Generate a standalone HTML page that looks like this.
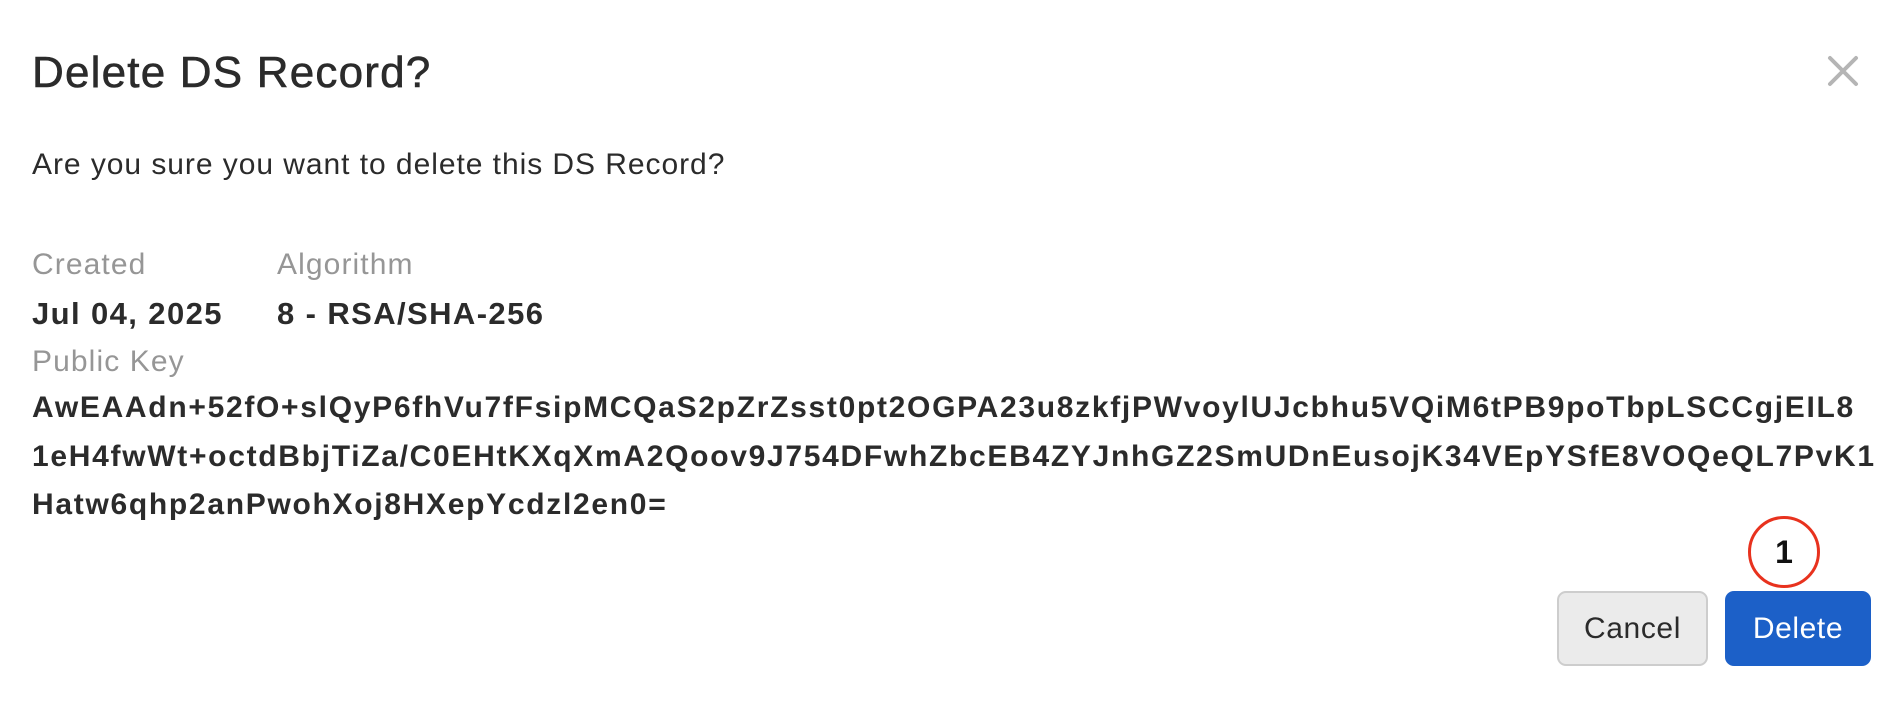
<!DOCTYPE html>
<html><head><meta charset="utf-8"><style>
body{margin:0;width:1903px;height:702px;background:#fff;font-family:"Liberation Sans",Helvetica,Arial,sans-serif;color:#2b2b2b;position:relative;overflow:hidden}
.a{position:absolute;white-space:nowrap}
.t{left:32px;top:48px;font-size:44px;letter-spacing:1.2px;-webkit-text-stroke:0.6px #2b2b2b}
.p{left:32px;top:148px;font-size:30px;letter-spacing:0.95px}
.l{font-size:30px;color:#969696;letter-spacing:1.1px}
.v{font-size:31px;font-weight:bold;letter-spacing:1.4px}
.k{left:32px;font-size:30px;font-weight:bold;letter-spacing:1.7px}
.btn{position:absolute;top:591px;height:75px;border-radius:9px;box-sizing:border-box;font-size:30px;letter-spacing:0.6px;display:flex;align-items:center;justify-content:center}
</style></head><body>
<div class="a t">Delete DS Record?</div>
<svg class="a" style="left:1827px;top:55px" width="32" height="32" viewBox="0 0 32 32"><path d="M3 3L29 29M29 3L3 29" stroke="#b5b5b5" stroke-width="4" stroke-linecap="round"/></svg>
<div class="a p">Are you sure you want to delete this DS Record?</div>
<div class="a l" style="left:32px;top:248px">Created</div>
<div class="a l" style="left:277px;top:248px">Algorithm</div>
<div class="a v" style="left:32px;top:296px">Jul 04, 2025</div>
<div class="a v" style="left:277px;top:296px">8 - RSA/SHA-256</div>
<div class="a l" style="left:32px;top:345px">Public Key</div>
<div class="a k" style="top:391px">AwEAAdn+52fO+slQyP6fhVu7fFsipMCQaS2pZrZsst0pt2OGPA23u8zkfjPWvoylUJcbhu5VQiM6tPB9poTbpLSCCgjEIL8</div>
<div class="a k" style="top:440px">1eH4fwWt+octdBbjTiZa/C0EHtKXqXmA2Qoov9J754DFwhZbcEB4ZYJnhGZ2SmUDnEusojK34VEpYSfE8VOQeQL7PvK1</div>
<div class="a k" style="top:488px">Hatw6qhp2anPwohXoj8HXepYcdzl2en0=</div>
<div class="a" style="left:1748px;top:516px;width:66px;height:66px;border:3px solid #e8321e;border-radius:50%;display:flex;align-items:center;justify-content:center;font-size:32px;font-weight:bold;color:#111">1</div>
<div class="btn" style="left:1557px;width:151px;background:#ebebeb;border:2px solid #cdcdcd;color:#2b2b2b">Cancel</div>
<div class="btn" style="left:1725px;width:146px;background:#1c60c8;color:#fff">Delete</div>
</body></html>
